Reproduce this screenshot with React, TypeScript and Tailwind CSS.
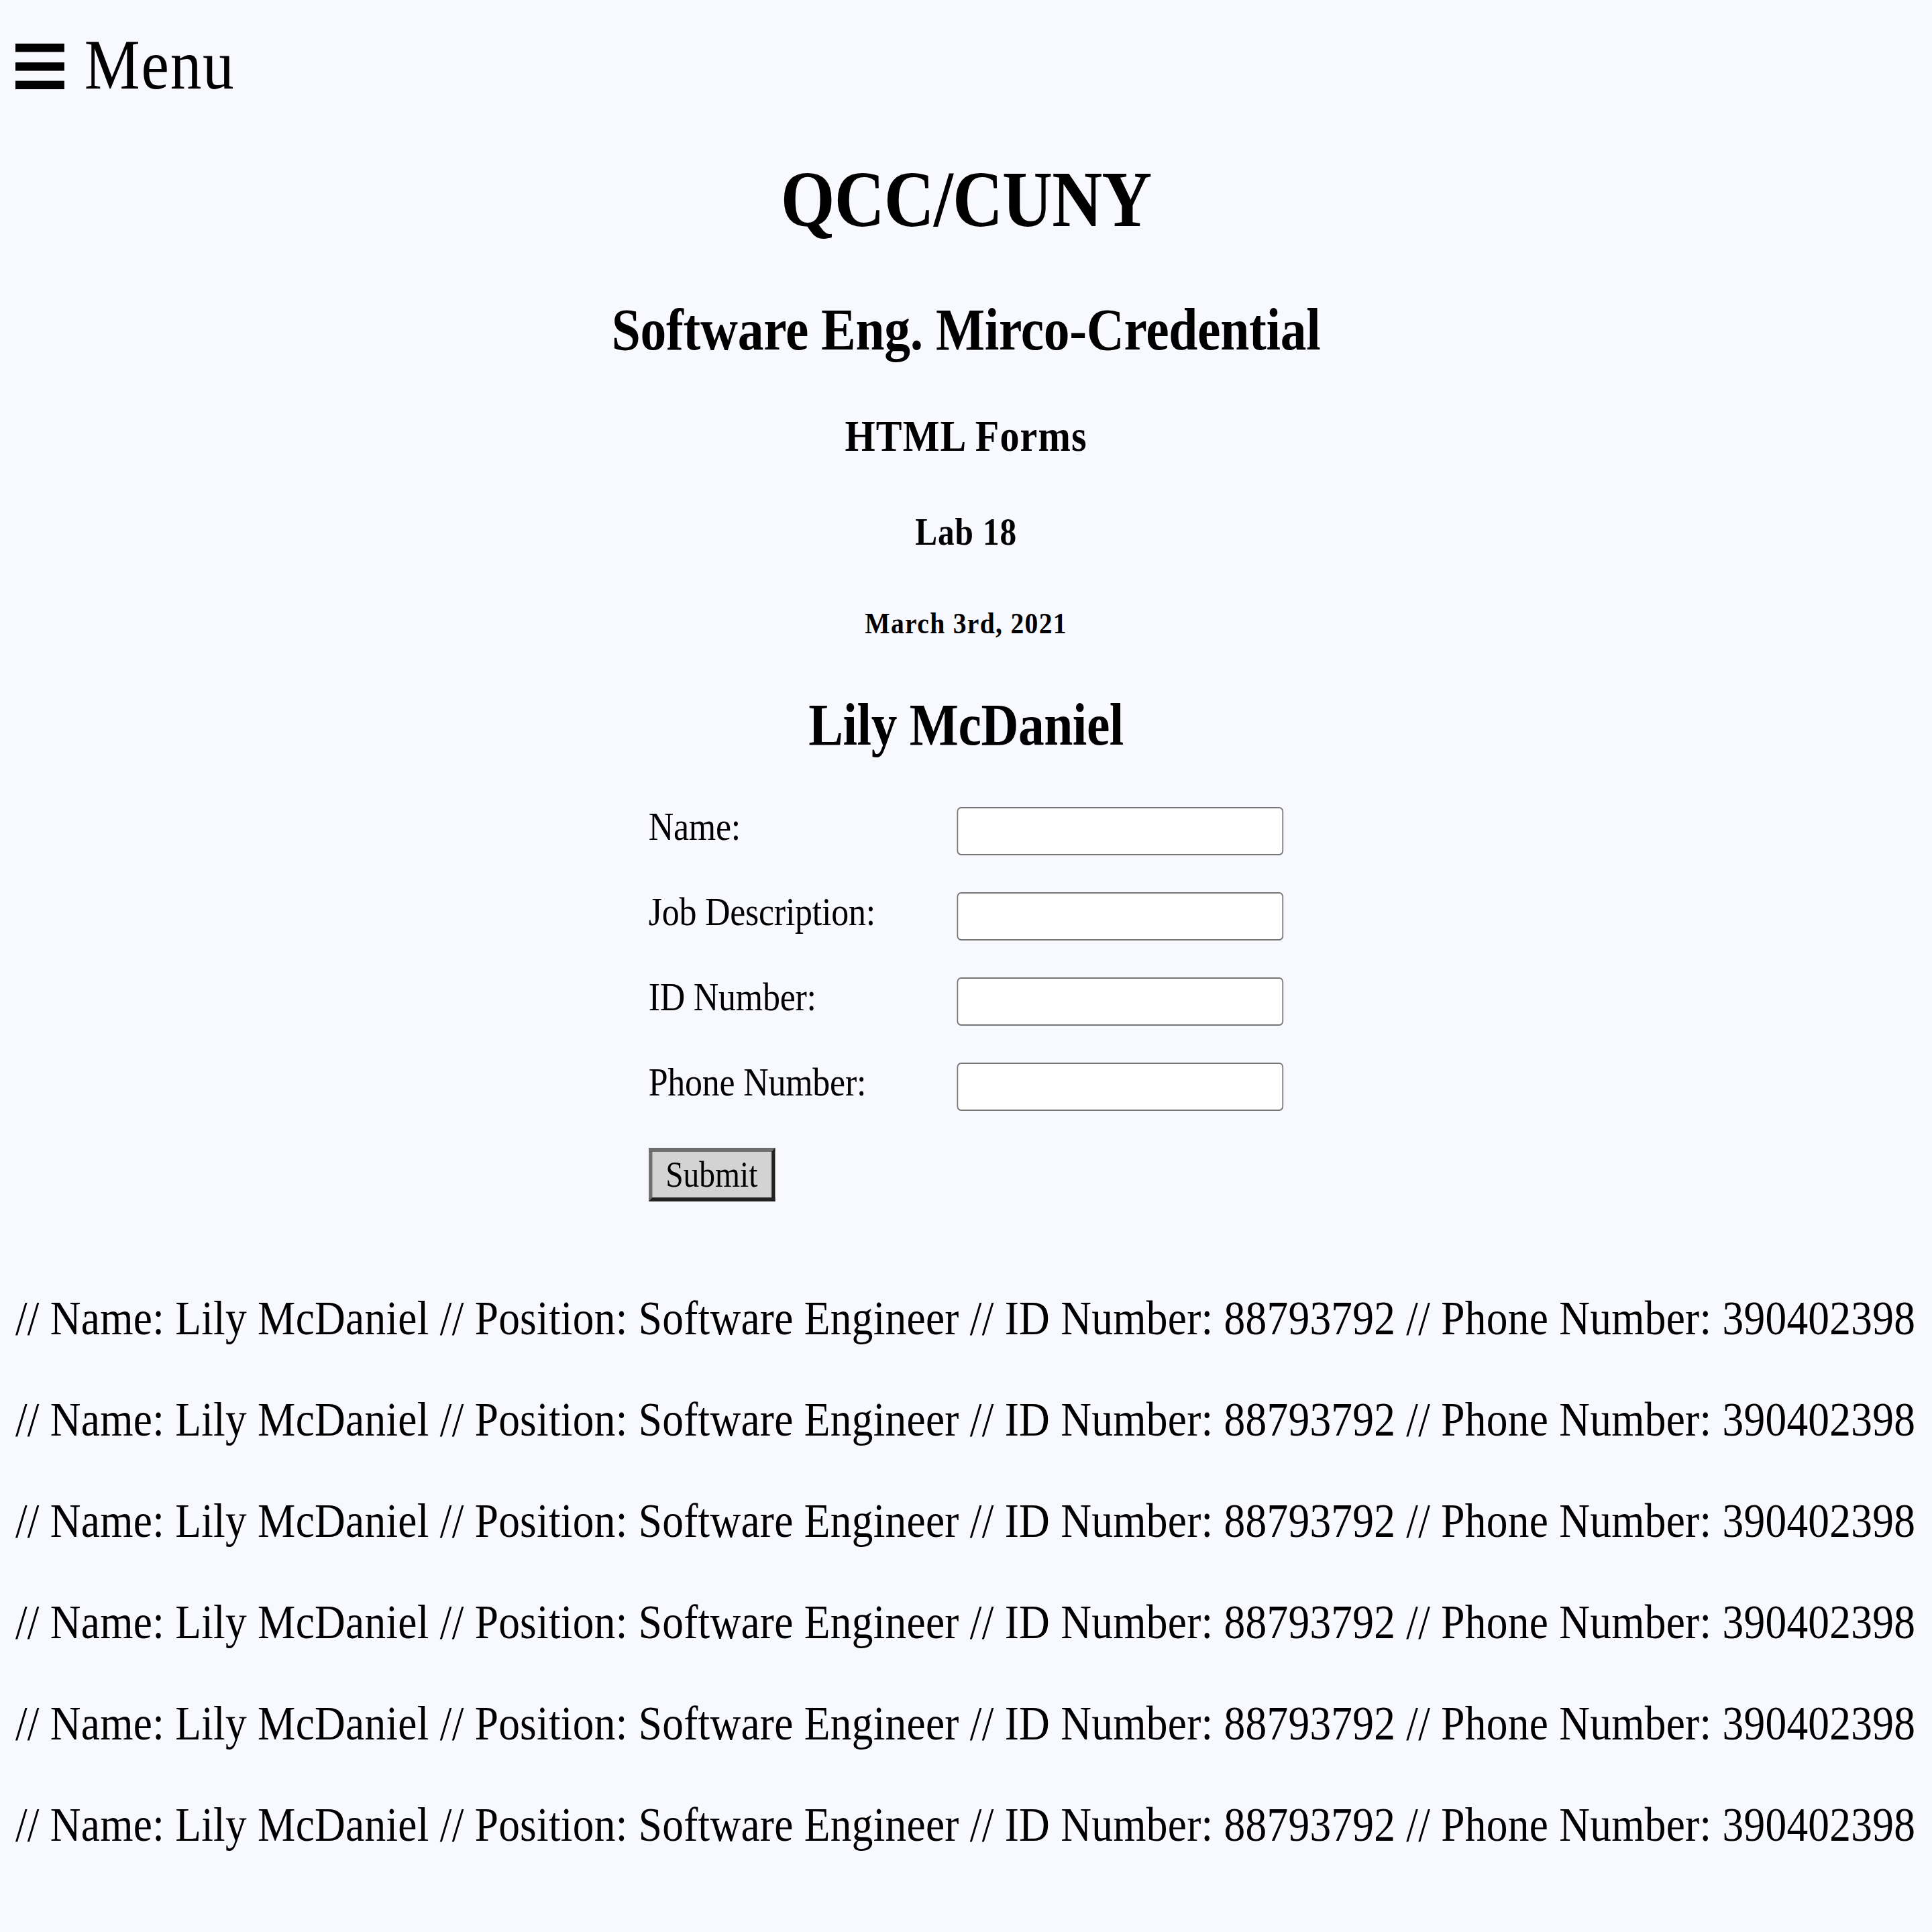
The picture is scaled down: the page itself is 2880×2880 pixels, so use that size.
const fields = ['Name:', 'Job Description:', 'ID Number:', 'Phone Number:'];

const entry =
  '// Name: Lily McDaniel // Position: Software Engineer // ID Number: 88793792 // Phone Number: 390402398';

function MenuIcon() {
  return (
    <svg className="mt-[21px] shrink-0" width="83" height="68" viewBox="0 0 83 68" fill="black">
      <rect x="0" y="0" width="83" height="12.5" />
      <rect x="0" y="28" width="83" height="12.5" />
      <rect x="0" y="55.5" width="83" height="12.5" />
    </svg>
  );
}

export default function App() {
  return (
    <div className="min-h-screen w-full overflow-hidden bg-[#f8f8ff] text-black font-['Liberation_Serif','Times_New_Roman',serif]">
      {/* the whole page is drawn a bit narrow, as in the shot */}
      <div className="w-[3273px] origin-top-left scale-x-[0.88] px-[26px] pt-[44px] pb-[120px]">
        <div className="flex h-[106px] items-start gap-[34px]">
          <MenuIcon />
          <span className="text-[106px] leading-none tracking-[2px]">Menu</span>
        </div>

        <h1 className="mt-[89px] text-center text-[118px] font-bold leading-none tracking-[-1px]">QCC/CUNY</h1>
        <h2 className="mt-[91px] text-center text-[88px] font-bold leading-none tracking-[-0.3px]">
          Software Eng. Mirco-Credential
        </h2>
        <h3 className="mt-[81px] text-center text-[66px] font-bold leading-none tracking-[1.25px]">HTML Forms</h3>
        <h4 className="mt-[82px] text-center text-[56px] font-bold leading-none tracking-[1px]">Lab 18</h4>
        <h5 className="mt-[86px] text-center text-[45px] font-bold leading-none tracking-[1.5px]">March 3rd, 2021</h5>
        <h2 className="mt-[85px] text-center text-[88px] font-bold leading-none tracking-[-0.5px]">Lily McDaniel</h2>

        <form className="mx-auto mt-[78px] flex w-[1076px] flex-col gap-[55px]" onSubmit={(e) => e.preventDefault()}>
          {fields.map((f) => (
            <div key={f} className="flex items-start">
              <label className="w-[522px] text-[59px] leading-none tracking-[-0.25px]">{f}</label>
              <input
                type="text"
                className="h-[72px] w-[553px] rounded-[7px] border-2 border-[#767676] bg-white outline-none"
              />
            </div>
          ))}
          <button
            type="submit"
            className="h-[80px] w-[214px] self-start border-[6px] border-t-[#6e6e6e] border-l-[#6e6e6e] border-b-[#222222] border-r-[#222222] bg-[#d3d3d3] text-[54px] leading-none"
          >
            Submit
          </button>
        </form>

        <div className="mt-[138px] flex flex-col gap-[79px]">
          {[0, 1, 2, 3, 4, 5].map((i) => (
            <p key={i} className="whitespace-nowrap text-[72px] leading-none tracking-[0.32px]">
              {entry}
            </p>
          ))}
        </div>
      </div>
    </div>
  );
}
